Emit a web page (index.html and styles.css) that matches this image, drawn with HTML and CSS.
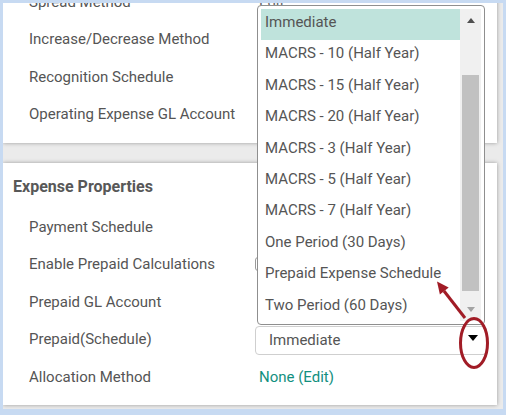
FILE: index.html
```html
<!DOCTYPE html>
<html lang="en">
<head>
<meta charset="utf-8">
<title>Expense Properties</title>
<link rel="stylesheet" href="styles.css">
</head>
<body>
<div class="frame">
  <section class="card card-top">
    <div class="row"><span class="label">Spread Method</span><span class="value muted">Edit</span></div>
    <div class="row"><span class="label">Increase/Decrease Method</span><span class="value"></span></div>
    <div class="row"><span class="label">Recognition Schedule</span><span class="value"></span></div>
    <div class="row"><span class="label">Operating Expense GL Account</span><span class="value"></span></div>
  </section>
  <section class="card card-expense">
    <h2 class="card-title">Expense Properties</h2>
    <div class="row"><span class="label">Payment Schedule</span><span class="value"></span></div>
    <div class="row"><span class="label">Enable Prepaid Calculations</span><span class="value"><span class="checkbox"></span></span></div>
    <div class="row"><span class="label">Prepaid GL Account</span><span class="value"></span></div>
    <div class="row"><span class="label">Prepaid(Schedule)</span><span class="value"><span class="select"><span class="select-text">Immediate</span><span class="caret"></span></span></span></div>
    <div class="row"><span class="label">Allocation Method</span><span class="value"><a class="link">None (Edit)</a></span></div>
  </section>
  <div class="listbox">
    <ul class="options">
      <li class="option selected">Immediate</li>
      <li class="option">MACRS - 10 (Half Year)</li>
      <li class="option">MACRS - 15 (Half Year)</li>
      <li class="option">MACRS - 20 (Half Year)</li>
      <li class="option">MACRS - 3 (Half Year)</li>
      <li class="option">MACRS - 5 (Half Year)</li>
      <li class="option">MACRS - 7 (Half Year)</li>
      <li class="option">One Period (30 Days)</li>
      <li class="option">Prepaid Expense Schedule</li>
      <li class="option">Two Period (60 Days)</li>
    </ul>
    <div class="track">
      <span class="sb-btn"><span class="tri-up"></span></span>
      <span class="thumb"></span>
      <span class="sb-fill"></span>
      <span class="sb-btn"><span class="tri-down"></span></span>
    </div>
  </div>
</div>
<svg class="annot" width="506" height="415" viewBox="0 0 506 415">
  <ellipse cx="474" cy="343" rx="13.5" ry="24.5" fill="none" stroke="#a11c26" stroke-width="3"/>
  <line x1="465" y1="318" x2="444" y2="291" stroke="#a11c26" stroke-width="3"/>
  <polygon points="437,281.5 439.9,294.6 448.7,287.6" fill="#a11c26"/>
</svg>
</body>
</html>
```

FILE: styles.css
```css
* { box-sizing: border-box; }

html, body {
  margin: 0;
  padding: 0;
}

body {
  position: relative;
  width: 506px;
  height: 415px;
  background: #c7daf2;
  font-family: Roboto, "Liberation Sans", sans-serif;
  color: #555;
  overflow: hidden;
}

.frame {
  position: relative;
  margin: 3px 3px 6px 3px;
  height: 406px;
  background: #ebebeb;
  overflow: hidden;
}

.card {
  background: #fff;
  margin-right: 6px;
  box-shadow: 0 0 4px rgba(0, 0, 0, 0.35);
}

.card-top {
  margin-top: -20px;
  padding-bottom: 10px;
  margin-bottom: 20px;
}

.card-expense {
  padding: 12px 0 9.5px 0;
}

.card-title {
  margin: 0 0 9px 0;
  padding-left: 10px;
  font-size: 16px;
  line-height: 24px;
  font-weight: 700;
  color: #585858;
}

.row {
  display: grid;
  grid-template-columns: 226px 1fr;
  align-items: center;
  height: 37.5px;
  padding-left: 26px;
  font-size: 15px;
}

.value {
  display: flex;
  align-items: center;
}

.muted {
  padding-left: 4px;
  color: #666;
}

.checkbox {
  width: 14px;
  height: 14px;
  border: 1px solid #9a9a9a;
  border-radius: 3px;
}

.select {
  display: flex;
  align-items: center;
  justify-content: space-between;
  width: 232px;
  height: 29px;
  margin-top: 2px;
  padding: 0 8px 0 13px;
  border: 1px solid #cfcfcf;
  border-radius: 4px;
  background: #fff;
}

.caret {
  width: 0;
  height: 0;
  border-left: 5.5px solid transparent;
  border-right: 5.5px solid transparent;
  border-top: 6px solid #000;
  margin-top: -4px;
}

.link {
  padding-left: 4px;
  color: #12907f;
  text-decoration: none;
}

.listbox {
  position: absolute;
  left: 254px;
  top: 2px;
  width: 228px;
  height: 320px;
  padding: 3px;
  display: flex;
  background: #fff;
  border: 1px solid #8f8f8f;
  border-radius: 4px;
}

.options {
  flex: 1;
  margin: 0;
  padding: 0;
  list-style: none;
  overflow: hidden;
}

.option {
  height: 31.4px;
  padding-left: 4px;
  font-size: 15px;
  line-height: 26px;
  white-space: nowrap;
}

.option.selected {
  background: #bfe3dc;
}

.track {
  width: 21px;
  display: flex;
  flex-direction: column;
  background: #f0f0f0;
}

.sb-btn {
  height: 23px;
  display: flex;
  align-items: center;
  justify-content: center;
  flex: none;
}

.tri-up {
  width: 0;
  height: 0;
  border-left: 4.5px solid transparent;
  border-right: 4.5px solid transparent;
  border-bottom: 5px solid #505050;
}

.tri-down {
  width: 0;
  height: 0;
  border-left: 4.5px solid transparent;
  border-right: 4.5px solid transparent;
  border-top: 5px solid #a3a3a3;
}

.thumb {
  flex: none;
  margin: 43px 2px 0 2px;
  height: 216px;
  background: #c1c1c1;
}

.sb-fill {
  flex: 1;
}

.annot {
  position: absolute;
  left: 0;
  top: 0;
  pointer-events: none;
}
```
